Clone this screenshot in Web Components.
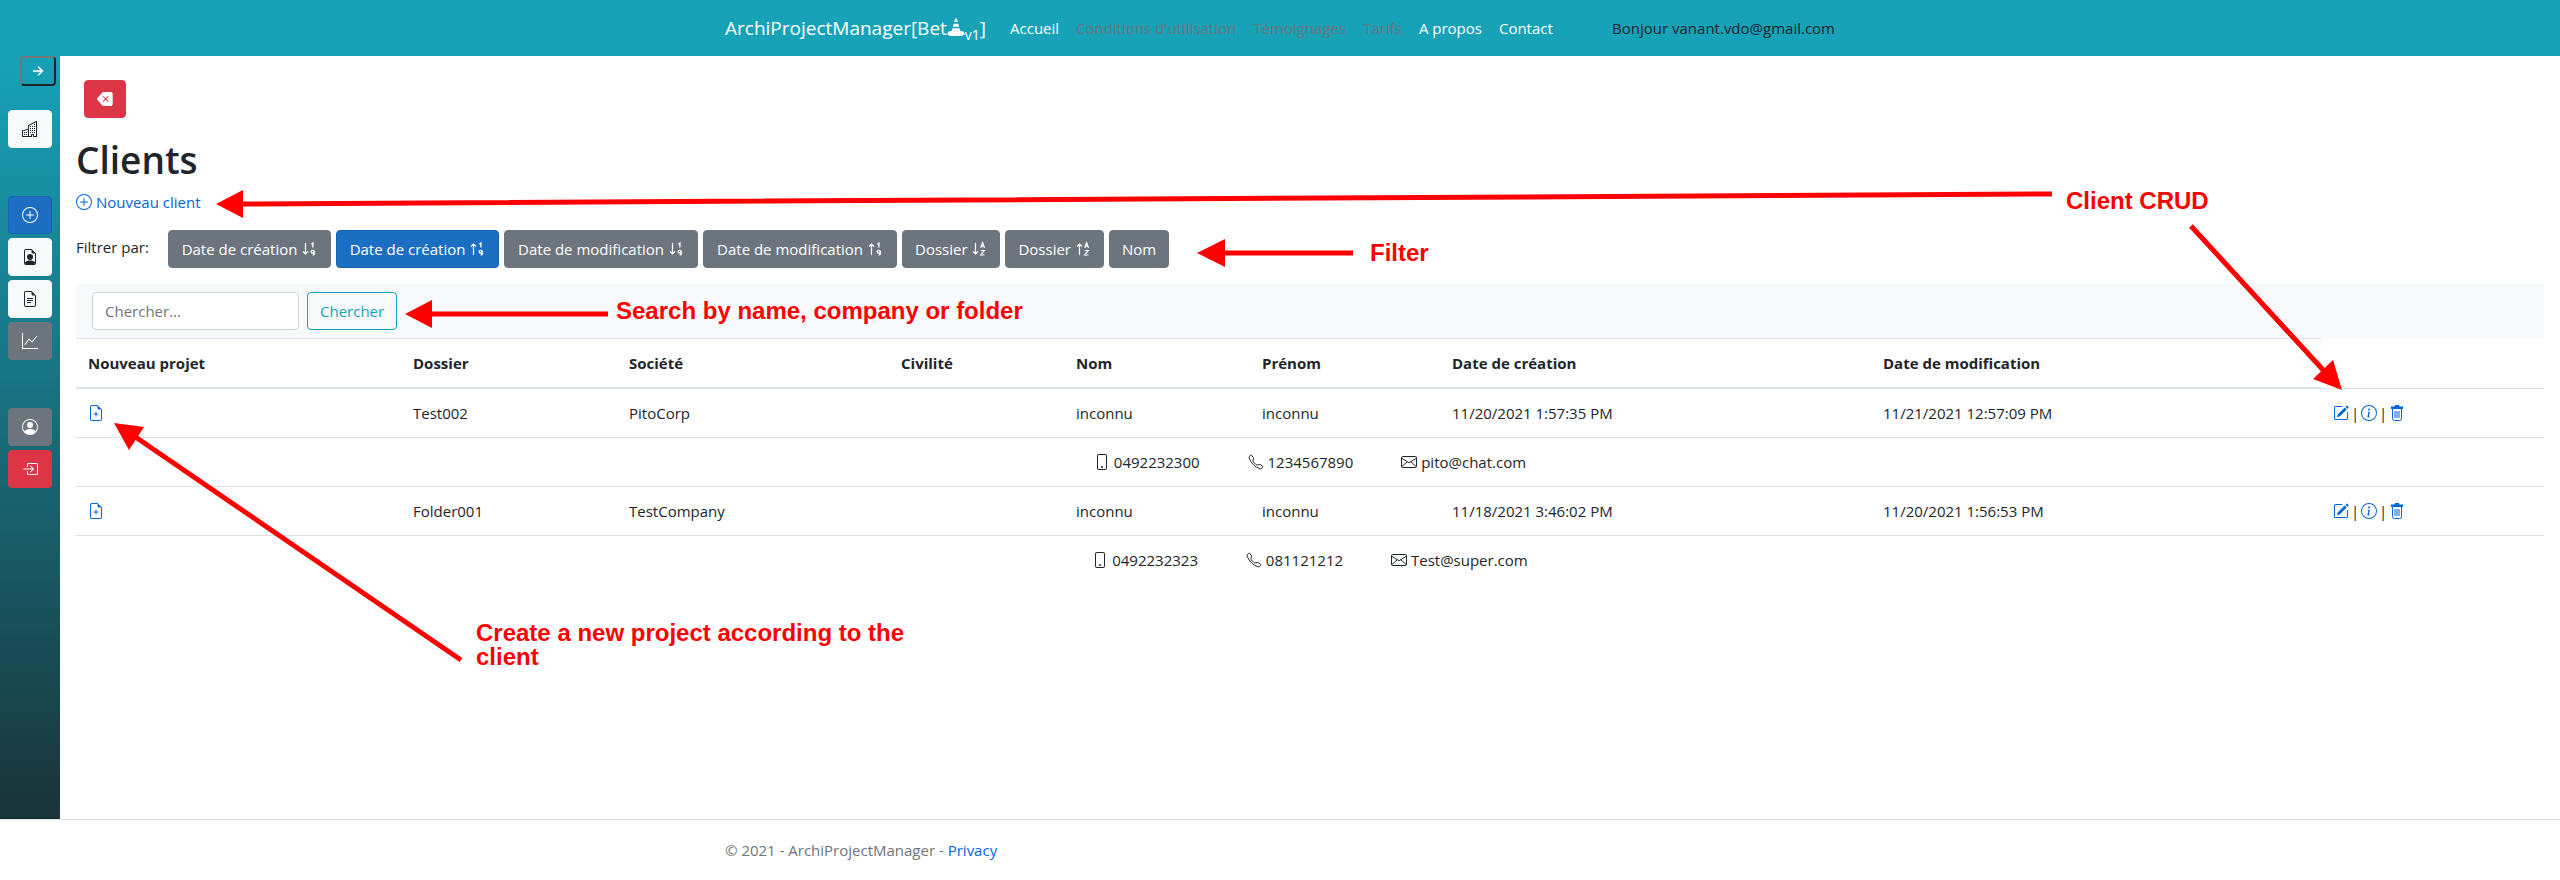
<!DOCTYPE html>
<html lang="fr">
<head>
<meta charset="utf-8">
<meta name="viewport" content="width=device-width, initial-scale=1">
<title>Clients - ArchiProjectManager</title>
<style>
  body { margin: 0; background: #fff; color: #212529; font: 15px/24px "Open Sans", "Noto Sans", sans-serif; }
</style>
</head>
<body>
<apm-page>
  <apm-navbar slot="header"></apm-navbar>
  <apm-sidebar slot="aside"></apm-sidebar>
  <apm-clients></apm-clients>
  <apm-footer slot="footer"></apm-footer>
  <apm-notes slot="overlay"></apm-notes>
</apm-page>

<script>
const define = (name, html, setup) => {
  const tpl = document.createElement('template');
  tpl.innerHTML = html;
  customElements.define(name, class extends HTMLElement {
    constructor() {
      super();
      this.attachShadow({ mode: 'open' }).append(tpl.content.cloneNode(true));
    }
    connectedCallback() { if (setup) setup(this, this.shadowRoot); }
  });
};

const FILE = '<path d="M14 4.500V14a2 2 0 0 1-2 2H4a2 2 0 0 1-2-2V2a2 2 0 0 1 2-2h5.500L14 4.500zm-3 0A1.500 1.500 0 0 1 9.500 3V1H4a1 1 0 0 0-1 1v12a1 1 0 0 0 1 1h8a1 1 0 0 0 1-1V4.500h-2z"/>';
const CIRCLE = '<path d="M8 15A7 7 0 1 1 8 1a7 7 0 0 1 0 14zm0 1A8 8 0 1 0 8 0a8 8 0 0 0 0 16z"/>';
const DOWN = '<path d="M4.500 2v11M2 10.500l2.500 2.500L7 10.500" fill="none" stroke="currentColor" stroke-width="1.200"/>';
const UP = '<path d="M4.500 14V3M2 5.500L4.500 3L7 5.500" fill="none" stroke="currentColor" stroke-width="1.200"/>';
const NUM = '<path d="M10.300 3.200L11.900 2V6.500M11.700 14c2.400 0 2.400-4.700 0-4.700c-2 0-2 2.700 0 2.700c1 0 1.600-.5 1.600-1.200" fill="none" stroke="currentColor" stroke-width="1.300"/>';
const ALPHA = '<path d="M9.700 6.800L11.600 1.800L13.500 6.800M10.300 5.300h2.600M9.700 9.500h3.600L9.700 14h3.900" fill="none" stroke="currentColor" stroke-width="1.200"/>';

const ICONS = {
  'arrow': '<path d="M4 8a.5.5 0 0 1 .5-.5h5.793L8.146 5.354a.5.5 0 1 1 .708-.708l3 3a.5.5 0 0 1 0 .708l-3 3a.5.5 0 0 1-.708-.708L10.293 8.500H4.500A.5.5 0 0 1 4 8z" stroke="currentColor" stroke-width=".4"/>',
  'backspace': '<path d="M15.683 3a2 2 0 0 0-2-2h-7.080a2 2 0 0 0-1.519.698L.241 7.350a1 1 0 0 0 0 1.302l4.843 5.650A2 2 0 0 0 6.603 15h7.080a2 2 0 0 0 2-2V3zM5.829 5.854a.5.5 0 1 1 .707-.708l2.147 2.147 2.146-2.147a.5.5 0 1 1 .707.708L9.390 8l2.146 2.146a.5.5 0 0 1-.707.708L8.683 8.707l-2.147 2.147a.5.5 0 0 1-.707-.708L7.976 8 5.829 5.854z"/>',
  'building': '<path fill-rule="evenodd" d="M14.763.075A.5.5 0 0 1 15 .5v15a.5.5 0 0 1-.5.5h-3a.5.5 0 0 1-.5-.5V14h-1v1.500a.5.5 0 0 1-.5.5h-9a.5.5 0 0 1-.5-.5V10a.5.5 0 0 1 .342-.474L6 7.640V4.500a.5.5 0 0 1 .276-.447l8-4a.5.5 0 0 1 .487.022zM6 8.694L1 10.360V15h5V8.694zM7 15h2v-1.500a.5.5 0 0 1 .5-.5h2a.5.5 0 0 1 .5.5V15h2V1.309l-7 3.500V15z"/><path d="M2 11h1v1H2v-1zm2 0h1v1H4v-1zm-2 2h1v1H2v-1zm2 0h1v1H4v-1zm4-4h1v1H8V9zm2 0h1v1h-1V9zm-2 2h1v1H8v-1zm2 0h1v1h-1v-1zm2-2h1v1h-1V9zm0 2h1v1h-1v-1zM8 7h1v1H8V7zm2 0h1v1h-1V7zm2 0h1v1h-1V7zM8 5h1v1H8V5zm2 0h1v1h-1V5zm2 0h1v1h-1V5zm0-2h1v1h-1V3z"/>',
  'plus-circle': CIRCLE + '<path d="M8 4a.5.5 0 0 1 .5.5v3h3a.5.5 0 0 1 0 1h-3v3a.5.5 0 0 1-1 0v-3h-3a.5.5 0 0 1 0-1h3v-3A.5.5 0 0 1 8 4z"/>',
  'file-person': FILE + '<path d="M11 8a3 3 0 1 1-6 0 3 3 0 0 1 6 0zM3 13.300c.9-1.300 2.700-1.800 5-1.800s4.100.5 5 1.800V14a1 1 0 0 1-1 1H4a1 1 0 0 1-1-1z"/>',
  'file-text': FILE + '<path d="M5 7h6v1H5zM5 9h6v1H5zM5 11h4v1H5z"/>',
  'file-plus': FILE + '<path d="M8 6.500a.5.5 0 0 1 .5.5v1.500H10a.5.5 0 0 1 0 1H8.500V11a.5.5 0 0 1-1 0V9.500H6a.5.5 0 0 1 0-1h1.500V7a.5.5 0 0 1 .5-.5z"/>',
  'graph': '<path fill-rule="evenodd" d="M0 0h1v15h15v1H0V0zm14.817 3.113a.5.5 0 0 1 .07.704l-4.500 5.500a.5.5 0 0 1-.74.037L7.060 6.767l-3.656 5.027a.5.5 0 0 1-.808-.588l4-5.500a.5.5 0 0 1 .758-.06l2.609 2.610 4.150-5.073a.5.5 0 0 1 .704-.07z"/>',
  'person': '<path d="M11 6a3 3 0 1 1-6 0 3 3 0 0 1 6 0z"/><path fill-rule="evenodd" d="M0 8a8 8 0 1 1 16 0A8 8 0 0 1 0 8zm8-7a7 7 0 0 0-5.468 11.370C3.242 11.226 4.805 10 8 10s4.757 1.225 5.468 2.370A7 7 0 0 0 8 1z"/>',
  'login': '<path fill-rule="evenodd" d="M6 3.500a.5.5 0 0 1 .5-.5h8a.5.5 0 0 1 .5.5v9a.5.5 0 0 1-.5.5h-8a.5.5 0 0 1-.5-.5v-2a.5.5 0 0 0-1 0v2A1.500 1.500 0 0 0 6.500 14h8a1.500 1.500 0 0 0 1.500-1.500v-9A1.500 1.500 0 0 0 14.500 2h-8A1.500 1.500 0 0 0 5 3.500v2a.5.5 0 0 0 1 0v-2z"/><path fill-rule="evenodd" d="M11.854 8.354a.5.5 0 0 0 0-.708l-3-3a.5.5 0 1 0-.708.708L10.293 7.500H1.500a.5.5 0 0 0 0 1h8.793l-2.147 2.146a.5.5 0 0 0 .708.708l3-3z"/>',
  'pencil': '<path d="M15.502 1.940a.5.5 0 0 1 0 .706L14.459 3.690l-2-2L13.502.646a.5.5 0 0 1 .707 0l1.293 1.293zm-1.750 2.456l-2-2L4.939 9.210a.5.5 0 0 0-.121.196l-.805 2.414a.25.25 0 0 0 .316.316l2.414-.805a.5.5 0 0 0 .196-.12l6.813-6.814z"/><path fill-rule="evenodd" d="M1 13.500A1.500 1.500 0 0 0 2.500 15h11a1.500 1.500 0 0 0 1.500-1.500v-6a.5.5 0 0 0-1 0v6a.5.5 0 0 1-.5.5h-11a.5.5 0 0 1-.5-.5v-11a.5.5 0 0 1 .5-.5H9a.5.5 0 0 0 0-1H2.500A1.500 1.500 0 0 0 1 2.500v11z"/>',
  'info': CIRCLE + '<path d="M8.930 6.588l-2.290.287-.082.380.450.083c.294.070.352.176.288.469l-.738 3.468c-.194.897.105 1.319.808 1.319.545 0 1.178-.252 1.465-.598l.088-.416c-.2.176-.492.246-.686.246-.275 0-.375-.193-.304-.533L8.930 6.588zM9 4.500a1 1 0 1 1-2 0 1 1 0 0 1 2 0z"/>',
  'trash': '<path d="M2 1.500h3.500L6 0h4l.5 1.500H14V4H2z"/><path d="M3.500 4v9.500a2 2 0 0 0 2 2h5a2 2 0 0 0 2-2V4M6 6v7M8 6v7M10 6v7" fill="none" stroke="currentColor"/>',
  'phone': '<path d="M11 1a1 1 0 0 1 1 1v12a1 1 0 0 1-1 1H5a1 1 0 0 1-1-1V2a1 1 0 0 1 1-1h6zM5 0a2 2 0 0 0-2 2v12a2 2 0 0 0 2 2h6a2 2 0 0 0 2-2V2a2 2 0 0 0-2-2H5z"/><path d="M8 14a1 1 0 1 0 0-2 1 1 0 0 0 0 2z"/>',
  'telephone': '<path d="M3.654 1.328a.678.678 0 0 0-1.015-.063L1.605 2.300c-.483.484-.661 1.169-.450 1.770a17.568 17.568 0 0 0 4.168 6.608 17.569 17.569 0 0 0 6.608 4.168c.601.211 1.286.033 1.770-.450l1.034-1.034a.678.678 0 0 0-.063-1.015l-2.307-1.794a.678.678 0 0 0-.580-.122l-2.190.547a1.745 1.745 0 0 1-1.657-.459L5.482 8.062a1.745 1.745 0 0 1-.460-1.657l.548-2.190a.678.678 0 0 0-.122-.580L3.654 1.328z" fill="none" stroke="currentColor"/>',
  'mail': '<path d="M1.800 2.500h12.400a1.300 1.300 0 0 1 1.300 1.300v8.400a1.300 1.300 0 0 1-1.300 1.300H1.800a1.300 1.300 0 0 1-1.300-1.300V3.800a1.300 1.300 0 0 1 1.300-1.300zM.7 4.300L8 8.700l7.300-4.400M.7 12.700l5.600-5M15.300 12.700l-5.600-5" fill="none" stroke="currentColor"/>',
  'cone': '<path d="M7.300.5h1.400l.9 3H6.400zM6 5h4l.8 2.700H5.200zM4.800 9.200h6.400l.8 2.600h2.300l1.700 2.700l-3 1.500H3l-3-1.500l1.700-2.700H4z"/>',
  'num-down': DOWN + NUM, 'num-up': UP + NUM, 'alpha-down': DOWN + ALPHA, 'alpha-up': UP + ALPHA
};

define('apm-icon', `
  <style>
    :host { display: inline-block; width: 16px; height: 16px; vertical-align: -2px; }
    svg { display: block; width: 100%; height: 100%; fill: currentColor; }
  </style>
  <svg viewBox="0 0 16 16" aria-hidden="true"></svg>`,
  (el, root) => { root.querySelector('svg').innerHTML = ICONS[el.getAttribute('name')] || ''; });

define('apm-button', `
  <style>
    :host { display: inline-block; }
    button { box-sizing: border-box; width: 100%; height: 38px; padding: 0 12px; border: 1px solid var(--edge, #6c757d);
      border-radius: 4px; background: var(--fill, #6c757d); color: var(--ink, #fff); font: inherit; line-height: 24px;
      white-space: nowrap; cursor: pointer; }
    :host([kind=primary]) button { --fill: #1b6ec2; --edge: #1861ac; }
    :host([kind=light]) button { --fill: #f8f9fa; --edge: #f8f9fa; --ink: #212529; }
    :host([kind=danger]) button { --fill: #dc3545; --edge: #dc3545; }
    :host([kind=info]) button { --fill: transparent; --edge: #17a2b8; --ink: #17a2b8; }
  </style>
  <button type="button"><slot></slot></button>`,
  (el, root) => { if (el.title) root.querySelector('button').setAttribute('aria-label', el.title); });

define('apm-page', `
  <style>
    :host { display: flex; flex-direction: column; position: relative; min-height: 100vh; }
    .body { display: flex; flex: 1; }
    main { flex: 1; min-width: 0; }
  </style>
  <slot name="header"></slot>
  <div class="body"><slot name="aside"></slot><main><slot></slot></main></div>
  <slot name="footer"></slot>
  <slot name="overlay"></slot>`);

define('apm-navbar', `
  <style>
    :host { display: block; background: #17a2b8; }
    nav { display: flex; align-items: center; box-sizing: border-box; max-width: 1140px; height: 56px; margin: 0 auto; padding: 0 15px; }
    a { color: #fff; text-decoration: none; white-space: nowrap; }
    .brand { margin-right: 24px; font-size: 19px; line-height: 32px; }
    .brand apm-icon { width: 18px; height: 20px; }
    sub { font-size: 14px; line-height: 0; }
    ul { display: flex; flex: 1; gap: 17px; margin: 0; padding: 0; list-style: none; }
    .off { color: #6c757d; }
    .user { color: #212529; }
  </style>
  <nav>
    <a class="brand" href="#">ArchiProjectManager[Bet<apm-icon name="cone"></apm-icon><sub>v1</sub>]</a>
    <ul>
      <li><a href="#">Accueil</a></li>
      <li><a class="off" href="#">Conditions d'utilisation</a></li>
      <li><a class="off" href="#">Témoignages</a></li>
      <li><a class="off" href="#">Tarifs</a></li>
      <li><a href="#">A propos</a></li>
      <li><a href="#">Contact</a></li>
    </ul>
    <a class="user" href="#">Bonjour vanant.vdo@gmail.com</a>
  </nav>`);

define('apm-sidebar', `
  <style>
    :host { display: block; flex: none; width: 60px; background: linear-gradient(#17a2b8, #1a3338); }
    .toggle { display: flex; align-items: center; justify-content: center; box-sizing: border-box; width: 36px; height: 30px;
      margin: 0 4px 24px auto; padding: 0; border: 2px solid; border-color: #767676 #212529 #212529 #767676;
      border-radius: 4px; background: none; color: #fff; cursor: pointer; }
    .toggle apm-icon { width: 20px; height: 20px; }
    nav { display: grid; gap: 48px; padding: 0 8px; }
    .group { display: grid; gap: 4px; }
  </style>
  <button class="toggle" type="button" aria-label="Ouvrir le menu"><apm-icon name="arrow"></apm-icon></button>
  <nav>
    <div class="group"><apm-button kind="light" title="Société"><apm-icon name="building"></apm-icon></apm-button></div>
    <div class="group">
      <apm-button kind="primary" title="Nouveau"><apm-icon name="plus-circle"></apm-icon></apm-button>
      <apm-button kind="light" title="Clients"><apm-icon name="file-person"></apm-icon></apm-button>
      <apm-button kind="light" title="Projets"><apm-icon name="file-text"></apm-icon></apm-button>
      <apm-button title="Statistiques"><apm-icon name="graph"></apm-icon></apm-button>
    </div>
    <div class="group">
      <apm-button title="Compte"><apm-icon name="person"></apm-icon></apm-button>
      <apm-button kind="danger" title="Déconnexion"><apm-icon name="login"></apm-icon></apm-button>
    </div>
  </nav>`);

define('apm-clients', `
  <style>
    :host { display: block; padding: 24px 16px; }
    .back { display: block; width: 42px; margin-left: 8px; }
    h1 { margin: 18px 0 6px; font-size: 37px; line-height: 48px; font-weight: 600; }
    p { margin: 0 0 16px; }
    a { color: #0366d6; text-decoration: none; }
    .filters { display: flex; gap: 5px; margin-bottom: 16px; }
    .filters span { width: 87px; margin-top: 5px; }
    .s { min-width: 98px; }
    .m { min-width: 163px; }
    .l { min-width: 194px; }
  </style>
  <apm-button class="back" kind="danger" title="Retour"><apm-icon name="backspace"></apm-icon></apm-button>
  <h1>Clients</h1>
  <p><a href="#"><apm-icon name="plus-circle"></apm-icon> Nouveau client</a></p>
  <div class="filters">
    <span>Filtrer par:</span>
    <apm-button class="m">Date de création <apm-icon name="num-down"></apm-icon></apm-button>
    <apm-button class="m" kind="primary">Date de création <apm-icon name="num-up"></apm-icon></apm-button>
    <apm-button class="l">Date de modification <apm-icon name="num-down"></apm-icon></apm-button>
    <apm-button class="l">Date de modification <apm-icon name="num-up"></apm-icon></apm-button>
    <apm-button class="s">Dossier <apm-icon name="alpha-down"></apm-icon></apm-button>
    <apm-button class="s">Dossier <apm-icon name="alpha-up"></apm-icon></apm-button>
    <apm-button>Nom</apm-button>
  </div>
  <apm-search></apm-search>
  <apm-table></apm-table>`);

define('apm-search', `
  <style>
    :host { display: block; background: #f8f9fa; }
    form { display: flex; gap: 8px; padding: 8px 16px; }
    input { box-sizing: border-box; width: 207px; height: 38px; padding: 0 12px; border: 1px solid #ced4da; border-radius: 4px;
      background: #fff; color: #495057; font: inherit; }
    input::placeholder { color: #6c757d; opacity: 1; }
  </style>
  <form role="search">
    <input type="search" placeholder="Chercher..." aria-label="Chercher">
    <apm-button kind="info">Chercher</apm-button>
  </form>`);

const CLIENTS = [
  ['Test002', 'PitoCorp', '', 'inconnu', 'inconnu', '11/20/2021 1:57:35 PM', '11/21/2021 12:57:09 PM', '0492232300', '1234567890', 'pito@chat.com'],
  ['Folder001', 'TestCompany', '', 'inconnu', 'inconnu', '11/18/2021 3:46:02 PM', '11/20/2021 1:56:53 PM', '0492232323', '081121212', 'Test@super.com']
];
const link = (icon, label) => `<a href="#" aria-label="${label}"><apm-icon name="${icon}"></apm-icon></a>`;
const rows = CLIENTS.map(c => `
  <tr><td>${link('file-plus', 'Nouveau projet')}</td>${c.slice(0, 7).map(v => `<td>${v}</td>`).join('')}
    <td><div class="actions">${link('pencil', 'Modifier')}<span>|</span>${link('info', 'Détails')}<span>|</span>${link('trash', 'Supprimer')}</div></td></tr>
  <tr><td colspan="9"><div class="contact">
    <span><apm-icon name="phone"></apm-icon> ${c[7]}</span>
    <span><apm-icon name="telephone"></apm-icon> ${c[8]}</span>
    <span><apm-icon name="mail"></apm-icon> ${c[9]}</span></div></td></tr>`).join('');

define('apm-table', `
  <style>
    :host { display: block; }
    table { width: 100%; table-layout: fixed; border-collapse: collapse; }
    th, td { padding: 12px; border-top: 1px solid #dee2e6; text-align: left; vertical-align: top; }
    th { border-bottom: 2px solid #dee2e6; font-weight: 700; }
    a { color: #0366d6; text-decoration: none; }
    .actions { display: flex; }
    .actions span { width: 12px; text-align: center; }
    .contact { display: flex; justify-content: center; gap: 48px; }
  </style>
  <table>
    <colgroup>${[325, 216, 272, 175, 186, 190, 431, 450, 223].map(w => `<col style="width:${w}px">`).join('')}</colgroup>
    <thead><tr>${['Nouveau projet', 'Dossier', 'Société', 'Civilité', 'Nom', 'Prénom', 'Date de création', 'Date de modification'].map(h => `<th scope="col">${h}</th>`).join('')}</tr></thead>
    <tbody>${rows}</tbody>
  </table>`);

define('apm-footer', `
  <style>
    :host { display: block; border-top: 1px solid #dee2e6; color: #6c757d; }
    footer { box-sizing: border-box; max-width: 1140px; margin: 0 auto; padding: 0 15px; line-height: 60px; }
    a { color: #0366d6; text-decoration: none; }
  </style>
  <footer>© 2021 - ArchiProjectManager - <a href="#">Privacy</a></footer>`);

/* Tutorial callouts: free-floating labels and arrows laid over the page. */
define('apm-notes', `
  <style>
    :host { position: absolute; inset: 0; overflow: hidden; pointer-events: none; color: #f00;
      font: bold 24px/24px "Liberation Sans", Arial, sans-serif; }
    svg { position: absolute; top: 0; left: 0; width: 2560px; height: 880px; }
    span { position: absolute; white-space: nowrap; }
  </style>
  <svg viewBox="0 0 2560 880" aria-hidden="true" fill="#f00" stroke="none">
    <g stroke="#f00" stroke-width="5">
      <path d="M2052 194L240 204M1353 253H1222M608 314H430M2191 226L2325 372M461 660L134 436"/>
    </g>
    <path d="M216 204L243 190V218zM1197 253L1225 239V267zM405 314L432 300V328zM2342 390L2333 360L2313 379zM114 423L144 427L129 450z"/>
  </svg>
  <span style="left:2066px;top:189px">Client CRUD</span>
  <span style="left:1370px;top:241px">Filter</span>
  <span style="left:616px;top:299px">Search by name, company or folder</span>
  <span style="left:476px;top:621px">Create a new project according to the<br>client</span>`);
</script>
</body>
</html>
